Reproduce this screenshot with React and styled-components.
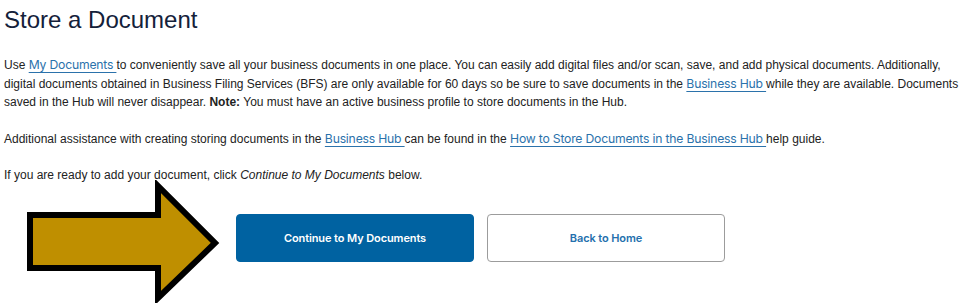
import React from "react";
import styled, { createGlobalStyle } from "styled-components";

const GlobalStyle = createGlobalStyle`
  body {
    margin: 0;
    background: #ffffff;
    font-family: Arial, "Liberation Sans", sans-serif;
  }
`;

const Page = styled.div`
  width: 962px;
  padding: 6px 2px 0 4px;
  box-sizing: border-box;
  height: 303px;
  overflow: hidden;
`;

const Title = styled.h1`
  margin: 0 0 22px 0;
  font-size: 24px;
  font-weight: 400;
  color: #14213a;
  line-height: 28px;
`;

const Para = styled.p`
  margin: 0 0 18px 0;
  font-size: 12px;
  line-height: 18.5px;
  color: #222222;
  &:last-of-type {
    margin-bottom: 0;
  }
`;

const Link = styled.a`
  font-family: Inter, "Noto Sans", sans-serif;
  font-size: 12.2px;
  color: #2b72ab;
  text-decoration: underline;
  text-decoration-thickness: 1px;
  text-underline-offset: 3px;
  letter-spacing: -0.2px;
  cursor: pointer;
`;

const ActionRow = styled.div`
  display: flex;
  align-items: flex-start;
  margin-top: -5px;
`;

const ArrowWrap = styled.div`
  width: 232px;
  height: 123px;
  flex: none;
  padding-left: 16px;
  box-sizing: border-box;
`;

const Buttons = styled.div`
  display: flex;
  gap: 13px;
  margin-top: 34px;
`;

const Button = styled.button`
  width: 238px;
  height: 48px;
  border-radius: 4px;
  font-family: Inter, "Noto Sans", sans-serif;
  font-size: 11px;
  font-weight: 600;
  letter-spacing: -0.1px;
  cursor: pointer;
  border: 1px solid ${(p) => (p.$primary ? "#0062a1" : "#9c9c9c")};
  background: ${(p) => (p.$primary ? "#0062a1" : "#ffffff")};
  color: ${(p) => (p.$primary ? "#ffffff" : "#2470ad")};
`;

const BigArrow = () => (
  <svg width="204" height="123" viewBox="0 0 204 123">
    <polygon
      points="10,35 138,35 138,6 195,63 138,118 138,88 10,88"
      fill="#bf8f00"
      stroke="#000000"
      strokeWidth="6"
      strokeLinejoin="miter"
    />
  </svg>
);

export default function App() {
  return (
    <>
      <GlobalStyle />
      <Page>
        <Title>Store a Document</Title>
        <Para>
          Use <Link>My Documents </Link>to conveniently save all your business
          documents in one place. You can easily add digital files and/or scan,
          save, and add physical documents. Additionally, digital documents
          obtained in Business Filing Services (BFS) are only available for 60
          days so be sure to save documents in the <Link>Business Hub </Link>
          while they are available. Documents saved in the Hub will never
          disappear. <b>Note:</b> You must have an active business profile to
          store documents in the Hub.
        </Para>
        <Para>
          Additional assistance with creating storing documents in the{" "}
          <Link>Business Hub </Link>can be found in the{" "}
          <Link>How to Store Documents in the Business Hub </Link>help guide.
        </Para>
        <Para>
          If you are ready to add your document, click{" "}
          <i>Continue to My Documents</i> below.
        </Para>
        <ActionRow>
          <ArrowWrap>
            <BigArrow />
          </ArrowWrap>
          <Buttons>
            <Button $primary>Continue to My Documents</Button>
            <Button>Back to Home</Button>
          </Buttons>
        </ActionRow>
      </Page>
    </>
  );
}
